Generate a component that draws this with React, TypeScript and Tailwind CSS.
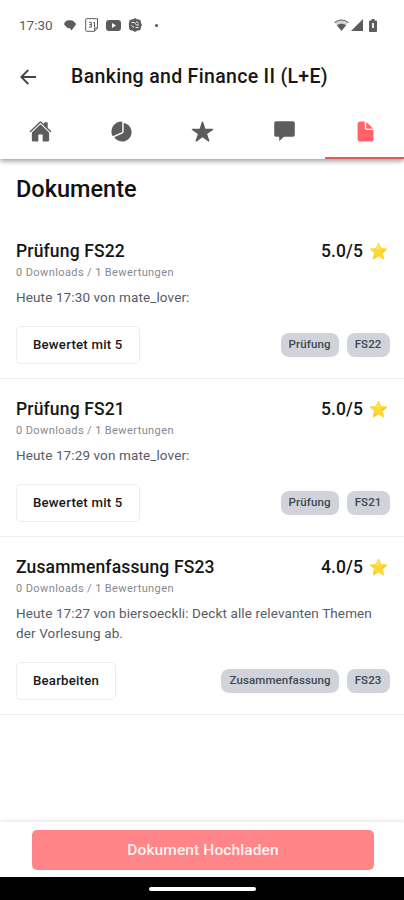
import { IoDocument, IoHome, IoPieChart, IoStar } from "react-icons/io5";

const documents = [
  {
    title: "Prüfung FS22",
    rating: "5.0/5",
    text: "Heute 17:30 von mate_lover:",
    action: "Bewertet mit 5",
    tags: ["Prüfung", "FS22"],
  },
  {
    title: "Prüfung FS21",
    rating: "5.0/5",
    text: "Heute 17:29 von mate_lover:",
    action: "Bewertet mit 5",
    tags: ["Prüfung", "FS21"],
  },
  {
    title: "Zusammenfassung FS23",
    rating: "4.0/5",
    text: "Heute 17:27 von biersoeckli: Deckt alle relevanten Themen der Vorlesung ab.",
    action: "Bearbeiten",
    tags: ["Zusammenfassung", "FS23"],
  },
];

function ChatIcon({ size }: { size: number }) {
  return (
    <svg width={size} height={size} viewBox="0 0 23 23" fill="currentColor">
      <path d="M3 1.2h17a1.8 1.8 0 0 1 1.8 1.8v12a1.8 1.8 0 0 1-1.8 1.8h-9L6.2 21v-4.2H3A1.8 1.8 0 0 1 1.2 15V3A1.8 1.8 0 0 1 3 1.2Z" />
    </svg>
  );
}

const tabs = [IoHome, IoPieChart, IoStar, ChatIcon, IoDocument];

function StatusBar() {
  return (
    <div className="flex h-[50px] shrink-0 items-center pl-[19px] pr-[27px] text-[#5c5c5c]">
      <span className="w-[45px] whitespace-nowrap text-[13.5px] leading-4">17:30</span>
      {/* message */}
      <svg className="h-3 w-3" viewBox="0 0 12 12" fill="currentColor">
        <path d="M.8 3.2C2 1.4 4 .8 5.5 1.4 8 .8 10 2.2 10.6 3.5 12.4 4 12 6.4 10.8 7L7.5 11.5 6 9.2C3.5 9.6 2.6 8.8 2.2 7.6.6 7-.4 5 .8 3.2Z" />
      </svg>
      {/* calendar */}
      <svg className="ml-[9px] h-[14px] w-[14px]" viewBox="0 0 14 14" fill="none" stroke="currentColor">
        <path d="M1.5.7h11v9.2l-3 3.4h-8a.8.8 0 0 1-.8-.8V1.5a.8.8 0 0 1 .8-.8ZM12.5 10H9.6v3" />
        <path d="M4 4.3h2.3v5M4.3 6.6h2M4 9.1h2.3M8.2 4.8l1.3-.6v5" />
      </svg>
      {/* video */}
      <svg className="ml-[7px] h-[11px] w-[15px]" viewBox="0 0 15 11">
        <rect width="15" height="11" rx="3" fill="currentColor" />
        <path d="m6 3 4 2.5L6 8Z" fill="#fff" />
      </svg>
      {/* hexagon badge */}
      <svg className="ml-[7px] h-[14px] w-[14px]" viewBox="0 0 14 14">
        <path d="m7 0 2 1.3 3.4.8.7 3.1L14 7l-.9 1.8-.7 3.1-3.4.8L7 14l-2-1.3-3.4-.8-.7-3.1V5.2l.7-3.1L5 1.3Z" fill="currentColor" />
        <path d="M3.5 4.5h3l2 2.5h2.5M3.5 7.5 6 9.5M8 3.5 10.5 5M7.5 9.5h3" fill="none" stroke="#fff" strokeWidth=".9" />
      </svg>
      <span className="ml-[13px] h-[3px] w-[3px] rounded-full bg-[#505050]" />
      {/* wifi */}
      <svg className="ml-auto h-3 w-[15px]" viewBox="0 0 15 12">
        <path d="M.6 3.6C4.5.1 10.5.1 14.4 3.6L7.5 11.6Z" fill="#d4d4d4" />
        <path d="M.6 3.6C4.5.1 10.5.1 14.4 3.6" fill="none" stroke="currentColor" strokeWidth="1.1" />
        <path d="M2.9 6.2c2.8-2 6.4-2 9.2 0L7.5 12Z" fill="currentColor" />
      </svg>
      <svg className="ml-[2px] h-3 w-3" viewBox="0 0 12 12" fill="currentColor">
        <path d="M12 0v12H0Z" />
      </svg>
      <svg className="ml-[6px] h-[13px] w-2" viewBox="0 0 8 13">
        <path d="M2.5 0h3v1.5H7a1 1 0 0 1 1 1V12a1 1 0 0 1-1 1H1a1 1 0 0 1-1-1V2.5a1 1 0 0 1 1-1h1.5Z" fill="currentColor" />
        <path d="M3 4h2v5H3Z" fill="#e8e8e8" />
      </svg>
    </div>
  );
}

function Star() {
  return (
    <svg className="h-[19px] w-[19px]" viewBox="0 0 20 20">
      <path
        d="m10 1 2.6 5.8 6.3.6-4.8 4.2 1.5 6.5-5.6-3.3-5.6 3.3 1.5-6.5-4.8-4.2 6.3-.6Z"
        fill="#fdd835"
        stroke="#fdd835"
        strokeLinejoin="round"
      />
      <path d="m10 1.5 1 6.5-1 1-2.2-2Z" fill="#fff176" opacity=".6" />
      <path d="m4.4 18 1.3-5.5 1 3 3.3-1.2ZM18.6 7.7l-5 1.4.7 2.4Z" fill="#f4b400" opacity=".5" />
    </svg>
  );
}

function DocumentItem({ doc }: { doc: (typeof documents)[number] }) {
  return (
    <li className="border-b border-[#f0f0f0] px-4 pb-[14.5px] pt-[18px]">
      <div className="flex h-6 items-center justify-between text-[17.5px] font-medium text-[#161616]">
        <h2 className="tracking-[0.15px]">{doc.title}</h2>
        <div className="flex items-center gap-[6px]">
          <span className="tracking-[0.1px]">{doc.rating}</span>
          <Star />
        </div>
      </div>
      <p className="mt-[2px] text-[11px] leading-4 tracking-[0.4px] text-[#858991]">0 Downloads / 1 Bewertungen</p>
      <p className="mt-[6px] text-[13.5px] leading-5 tracking-[0.12px] text-[#565c66]">{doc.text}</p>
      <div className="mt-[19px] flex items-center justify-between">
        <button className="h-[37.5px] rounded-[5px] border border-[#eeeeee] px-4 text-[13.2px] font-medium tracking-[0.23px] text-[#171717]">
          {doc.action}
        </button>
        <div className="-mr-[1.5px] flex gap-2">
          {doc.tags.map((tag) => (
            <span
              key={tag}
              className="flex h-6 items-center rounded-[8px] bg-[#d0d3d9] px-2 text-[11.5px] font-medium tracking-[0.12px] text-[#404753]"
            >
              {tag}
            </span>
          ))}
        </div>
      </div>
    </li>
  );
}

export default function App() {
  return (
    <div className="flex h-[900px] w-[404px] flex-col overflow-hidden bg-white font-[Roboto,sans-serif] text-black">
      <header className="relative shrink-0 shadow-[0_2px_5px_rgba(0,0,0,0.4)]">
        <StatusBar />
        <div className="flex h-[53px] items-center pl-5">
          <svg className="h-4 w-4" viewBox="0 0 16 16" fill="none" stroke="#444" strokeWidth="1.8">
            <path d="M16 8H1.5M8.3 1 1.3 8l7 7" />
          </svg>
          <h1 className="ml-[35px] whitespace-nowrap text-[19.5px] font-medium tracking-[0.32px] text-[#171717]">
            Banking and Finance II (L+E)
          </h1>
        </div>
        <nav className="grid h-14 w-[406px] grid-cols-5">
          {tabs.map((Icon, i) => (
            <button
              key={i}
              className={
                i === 4
                  ? "flex justify-center border-b-2 border-[#e5595e] pt-[17px] text-[#ff6268]"
                  : "flex justify-center border-b-2 border-transparent pt-[17px] text-[#5c5c5c]"
              }
            >
              <Icon size={23} />
            </button>
          ))}
        </nav>
      </header>

      <main className="flex-1">
        <h2 className="pl-4 pt-[14px] text-[23.5px] font-medium leading-8 text-[#111]">Dokumente</h2>
        <ul className="mt-4">
          {documents.map((doc) => (
            <DocumentItem key={doc.title} doc={doc} />
          ))}
        </ul>
      </main>

      <footer className="flex h-[55px] shrink-0 items-start pl-8 pr-[30px] pt-2 shadow-[0_-1px_4px_rgba(0,0,0,0.12)]">
        <button className="h-10 w-full rounded-[5px] bg-[#ff8588] pt-px text-[15.5px] font-medium tracking-[0.1px] text-[#fff2f2]">
          Dokument Hochladen
        </button>
      </footer>
      <div className="flex h-[23px] shrink-0 items-center justify-center bg-black">
        <div className="h-1 w-[107px] rounded-full bg-white" />
      </div>
    </div>
  );
}
